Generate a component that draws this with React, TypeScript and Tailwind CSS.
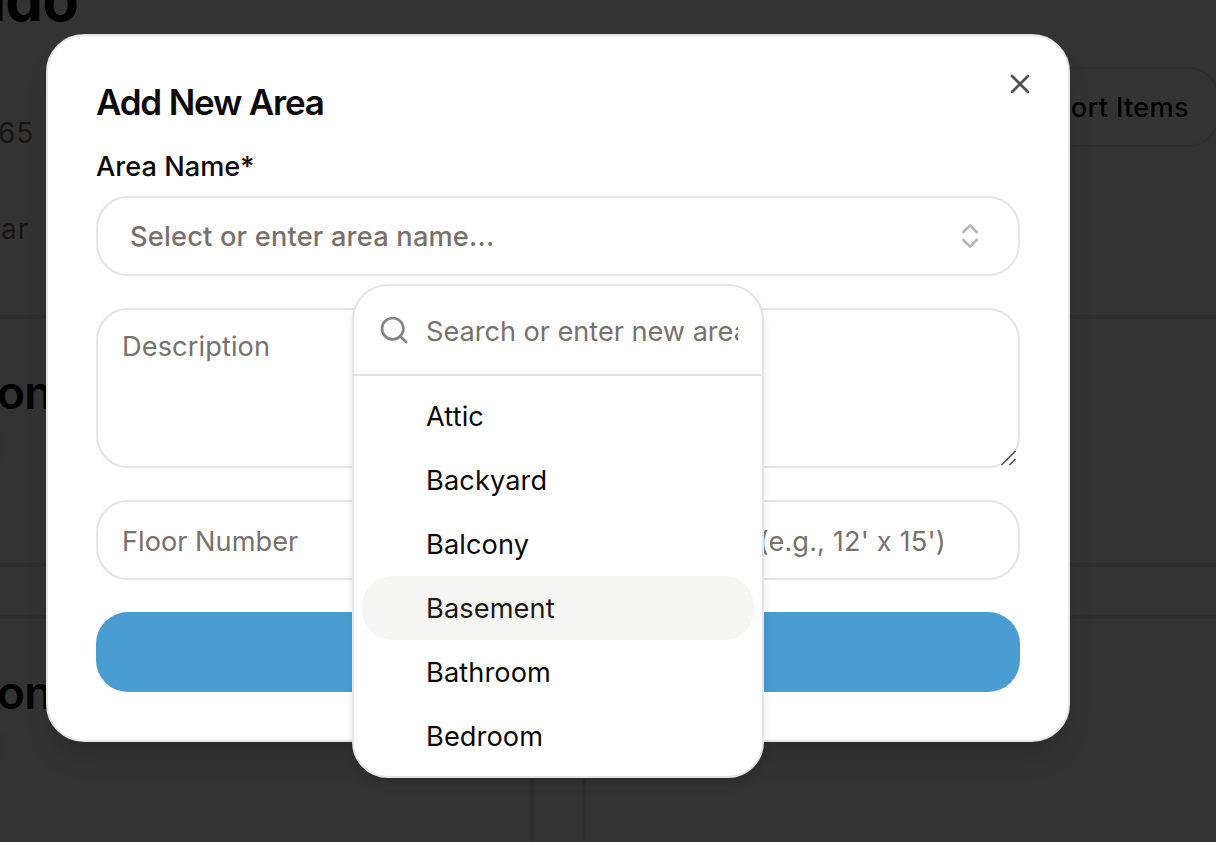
import { ChevronsUpDown, Search, X } from 'lucide-react';

const areas = ['Attic', 'Backyard', 'Balcony', 'Basement', 'Bathroom', 'Bedroom'];
const highlighted = 'Basement';

const field =
  'rounded-[32px] border-2 border-[#e5e5e5] bg-white px-6 outline-none placeholder:text-[#78716c] placeholder:opacity-100';

function Room({ heading }: { heading: string }) {
  return (
    <div className="grid h-[252px] grid-cols-[534px_1fr] gap-12">
      <div className="rounded-r-[32px] border-4 border-l-0 border-[#e7e5e4] pt-[43px]">
        <h3 className="-ml-[3px] text-[46px] leading-[60px] font-semibold tracking-[-0.8px] text-black">{heading}</h3>
        <div className="mt-[9px] h-8 w-1.5 rounded-r-full bg-[#fafaf9]" />
      </div>
      <div className="rounded-l-[32px] border-4 border-r-0 border-[#e7e5e4]" />
    </div>
  );
}

function Page() {
  return (
    <div className="h-[842px] w-full overflow-hidden bg-white">
      <header className="flex h-[315px] justify-between">
        <div className="text-[28px] text-[#78716c]">
          <h1 className="-ml-[31px] -mt-[37px] h-[72px] text-[60px] leading-[72px] font-bold tracking-[-1px] text-black">
            ndo
          </h1>
          <p className="-ml-[2px] mt-[78px] leading-10 tracking-[1px]">65</p>
          <p className="ml-px mt-14 leading-10 tracking-[1px]">ar</p>
        </div>
        <button className="-mr-1 mt-[67px] flex h-20 w-[260px] items-center justify-end rounded-[32px] border-2 border-[#e7e5e4] pr-[29px] pt-0.5 text-[27.2px] font-medium tracking-[0.3px] text-black">
          ort Items
        </button>
      </header>
      <main className="flex flex-col gap-12">
        <Room heading="on" />
        <Room heading="on" />
      </main>
    </div>
  );
}

function AreaPicker() {
  return (
    <div className="absolute left-[352px] top-[284px] flex h-[494px] w-[412px] flex-col overflow-hidden rounded-[36px] border-2 border-[#e5e5e5] bg-white shadow-[0_8px_12px_-2px_rgba(0,0,0,0.1),0_4px_8px_-4px_rgba(0,0,0,0.1)]">
      <div className="flex h-[90px] shrink-0 items-center border-b-2 border-[#e5e5e5] px-6">
        <Search className="mr-4 size-8 shrink-0 text-[#0c0a09] opacity-50" strokeWidth={2} />
        <input
          className="h-20 w-full min-w-0 bg-transparent pt-0.5 text-[27.2px] tracking-[-0.05px] outline-none placeholder:text-[#78716c] placeholder:opacity-100"
          placeholder="Search or enter new area name..."
        />
      </div>
      <ul className="p-2">
        {areas.map((area) => (
          <li
            key={area}
            className={
              area === highlighted
                ? 'flex h-16 items-center rounded-[30px] bg-[#f5f5f4] pl-16 pt-0.5 text-[27.2px] tracking-[0.1px] text-[#1c1917]'
                : 'flex h-16 items-center rounded-[30px] pl-16 pt-0.5 text-[27.2px] tracking-[0.1px] text-[#0c0a09]'
            }
          >
            {area}
          </li>
        ))}
      </ul>
    </div>
  );
}

function AreaDialog() {
  return (
    <div className="h-[708px] w-[1024px] rounded-[38px] border-2 border-[#e5e5e5] bg-white px-12 pt-8 shadow-[0_20px_30px_-6px_rgba(0,0,0,0.1),0_8px_12px_-8px_rgba(0,0,0,0.1)]">
      <div className="-mr-4 flex h-[68px] justify-between">
        <h2 className="pt-4 text-[35px] leading-9 font-semibold tracking-[-1.2px] text-[#0c0a09]">Add New Area</h2>
        <button aria-label="Close" className="size-8 opacity-70">
          <X className="size-8 text-[#0c0a09]" strokeWidth={2} />
        </button>
      </div>
      <form className="flex flex-col gap-8">
        <div>
          <label className="block pt-[11px] text-[27.2px] leading-10 font-medium text-[#0c0a09]">Area Name*</label>
          <button
            type="button"
            className="mt-[9px] flex h-20 w-full items-center justify-between rounded-[32px] border-2 border-[#e5e5e5] bg-white pl-8 pr-8 text-[27.2px] font-medium tracking-[0.2px] text-[#78716c]"
          >
            <span className="pt-0.5">Select or enter area name...</span>
            <ChevronsUpDown className="size-8 opacity-50" strokeWidth={2} />
          </button>
        </div>
        <div className="relative h-40">
          <textarea
            className={`${field} block h-40 w-full resize-none overflow-hidden pt-[17px] text-[27.2px] leading-10 tracking-[0.1px]`}
            placeholder="Description"
          />
          <svg className="absolute bottom-0 right-0 size-5" viewBox="0 0 20 20" stroke="#555" strokeWidth="1.7">
            <path d="M1.5 17 15.5 3M9.5 17 15.5 11" fill="none" />
          </svg>
        </div>
        <div className="grid grid-cols-2 gap-8">
          <input
            className={`${field} h-20 min-w-0 pt-0.5 text-[27.2px]`}
            placeholder="Floor Number"
          />
          <input
            className={`${field} h-20 min-w-0 pt-0.5 text-[27.2px] tracking-[0.13px]`}
            placeholder="Dimensions (e.g., 12' x 15')"
          />
        </div>
        <button type="button" aria-label="Add Area" className="h-20 rounded-[32px] bg-[#4a9dd0]" />
      </form>
    </div>
  );
}

export default function App() {
  return (
    <div className="relative h-[842px] w-full overflow-hidden font-['Inter',sans-serif]">
      <Page />
      <div className="absolute inset-0 bg-black/80 pl-[46px] pt-[34px]">
        <AreaDialog />
      </div>
      <AreaPicker />
    </div>
  );
}
